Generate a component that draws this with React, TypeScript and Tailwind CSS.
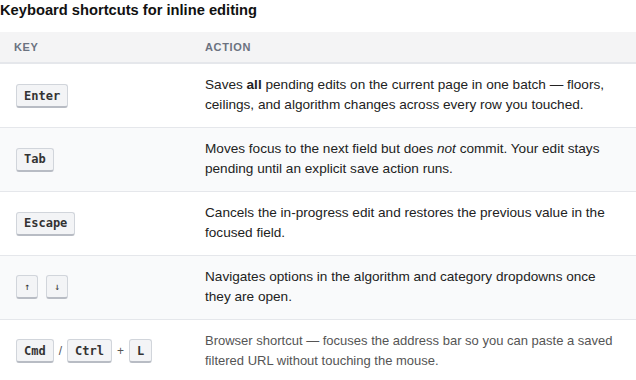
import React from "react";

const sans = { fontFamily: '"Liberation Sans", Arial, sans-serif' };

function Kbd({ children, small }: { children: React.ReactNode; small?: boolean }) {
  return (
    <kbd
      className={
        "inline-flex h-[24px] items-center justify-center rounded-[3px] border border-[#d1d5db] border-b-2 border-b-[#b8bcc4] bg-[#f3f4f6] text-[#333] " +
        (small ? "min-w-[22px] px-[6px] text-[10px] font-normal" : "px-[7px] text-[12px] font-bold")
      }
      style={{ fontFamily: '"DejaVu Sans Mono", "Liberation Mono", monospace' }}
    >
      {children}
    </kbd>
  );
}

function Sep({ children }: { children: React.ReactNode }) {
  return <span className="mx-[5px] text-[12px] text-[#555]">{children}</span>;
}

const rows: { keys: React.ReactNode; action: React.ReactNode; muted?: boolean }[] = [
  {
    keys: <Kbd>Enter</Kbd>,
    action: (
      <>
        Saves <b>all</b> pending edits on the current page in one batch — floors, ceilings, and algorithm changes across
        every row you touched.
      </>
    ),
  },
  {
    keys: <Kbd>Tab</Kbd>,
    action: (
      <>
        Moves focus to the next field but does <i>not</i> commit. Your edit stays pending until an explicit save action
        runs.
      </>
    ),
  },
  {
    keys: <Kbd>Escape</Kbd>,
    action: <>Cancels the in-progress edit and restores the previous value in the focused field.</>,
  },
  {
    keys: (
      <span className="flex gap-[8px]">
        <Kbd small>↑</Kbd>
        <Kbd small>↓</Kbd>
      </span>
    ),
    action: <>Navigates options in the algorithm and category dropdowns once they are open.</>,
  },
  {
    keys: (
      <span className="flex items-center">
        <Kbd>Cmd</Kbd>
        <Sep>/</Sep>
        <Kbd>Ctrl</Kbd>
        <Sep>+</Sep>
        <Kbd>L</Kbd>
      </span>
    ),
    action: <>Browser shortcut — focuses the address bar so you can paste a saved filtered URL without touching the mouse.</>,
    muted: true,
  },
];

export default function App() {
  return (
    <div className="w-[636px] bg-white" style={sans}>
      <h2 className="mb-[12px] text-[14.7px] font-bold leading-[20px] text-[#111]">Keyboard shortcuts for inline editing</h2>
      <table className="w-full border-collapse">
        <thead>
          <tr className="border-b-2 border-[#e5e7eb] bg-[#f4f4f5]">
            <th className="h-[31px] w-[189px] px-[14px] text-left text-[11px] font-bold uppercase tracking-[0.06em] text-[#6b7280]">
              Key
            </th>
            <th className="px-[16px] text-left text-[11px] font-bold uppercase tracking-[0.06em] text-[#6b7280]">
              Action
            </th>
          </tr>
        </thead>
        <tbody>
          {rows.map((r, i) => (
            <tr key={i} className={"border-b border-[#e5e7eb] " + (i % 2 === 1 ? "bg-[#f9fafb]" : "bg-white")}>
              <td className="h-[64px] px-[16px] align-middle">{r.keys}</td>
              <td
                className={
                  "py-[11px] pl-[16px] pr-[16px] align-middle leading-[20px] " +
                  (r.muted ? "text-[13px] text-[#555]" : "text-[13.6px] text-[#222]")
                }
              >
                {r.action}
              </td>
            </tr>
          ))}
        </tbody>
      </table>
    </div>
  );
}
